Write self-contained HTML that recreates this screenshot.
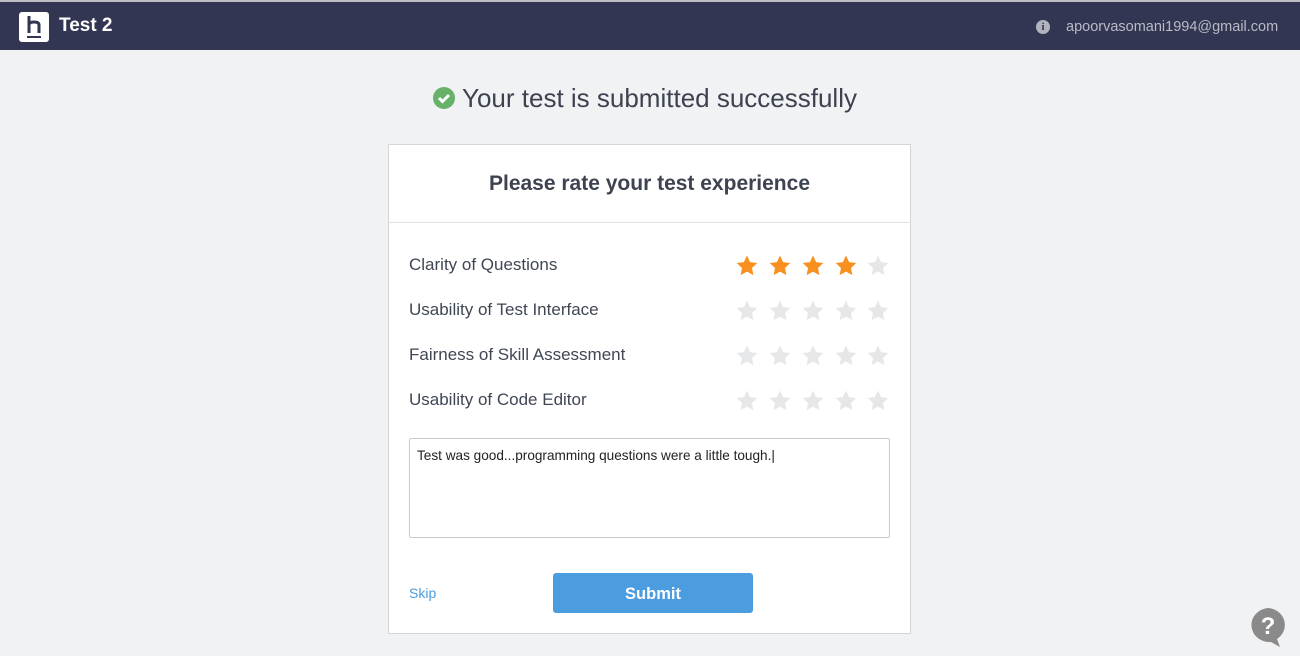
<!DOCTYPE html>
<html><head><meta charset="utf-8"><style>
*{margin:0;padding:0;box-sizing:border-box}
body{width:1300px;height:656px;background:#f1f2f4;font-family:"Liberation Sans","DejaVu Sans",sans-serif;position:relative;overflow:hidden}
.top{position:absolute;left:0;top:0;width:1300px;height:2px;background:#bdbdc2}
.hdr{position:absolute;left:0;top:2px;width:1300px;height:48px;background:#333652}
.logo{position:absolute;left:19px;top:10px;width:30px;height:30px;background:#fff;border-radius:3px}
.ttl{position:absolute;left:59px;top:13px;color:#fff;font-weight:bold;font-size:19px}
.info{position:absolute;left:1036px;top:18px;width:14px;height:14px;border-radius:50%;background:#b0b3bd;color:#333652;font-size:11px;font-weight:bold;text-align:center;line-height:14px;font-family:"Liberation Serif",serif}
.mail{position:absolute;left:1066px;top:17px;color:#b8bbc6;font-size:14.5px}
.succ{position:absolute;top:83px;font-size:26px;color:#3c4250}
.chk{position:absolute;left:433px;top:87px;width:22px;height:22px;border-radius:50%;background:#67b168}
.card{position:absolute;left:388px;top:144px;width:523px;height:490px;background:#fff;border:1px solid #d3d5d9}
.ch{height:78px;border-bottom:1px solid #e2e3e6;text-align:center;font-weight:bold;font-size:21px;color:#3d4350;padding-top:27px}
.row{position:absolute;left:20px;font-size:17px;color:#3f4654}
.stars{position:absolute;left:346px}
.stars svg{position:absolute;width:24px;height:24px}
.ta{position:absolute;left:20px;top:293px;width:481px;height:100px;border:1px solid #c9cbcf;border-radius:2px;font-size:13.6px;color:#222;padding:9px 7px}
.skip{position:absolute;left:20px;top:440px;color:#4a9de0;font-size:14px}
.btn{position:absolute;left:164px;top:428px;width:200px;height:40px;background:#4c9ce0;border-radius:3px;color:#fff;font-weight:bold;font-size:16.5px;text-align:center;line-height:42px}
</style></head><body>
<div class="top"></div>
<div class="hdr">
<div class="logo"><svg width="30" height="30" viewBox="0 0 30 30"><path d="M10 4v17M10 13q0-3 5-3t5 3v8" stroke="#333652" stroke-width="3" fill="none"/><rect x="8" y="24" width="14" height="2" fill="#333652"/></svg></div>
<div class="ttl">Test 2</div>
<div class="info">i</div>
<div class="mail">apoorvasomani1994@gmail.com</div>
</div>
<div class="chk"><svg width="22" height="22" viewBox="0 0 22 22"><path d="M6 11l3.5 3.5L16 8" stroke="#fff" stroke-width="3" fill="none"/></svg></div>
<div class="succ" style="left:462px">Your test is submitted successfully</div>
<div class="card">
<div class="ch">Please rate your test experience</div>
<div class="row" style="top:110px">Clarity of Questions</div>
<div class="row" style="top:155px">Usability of Test Interface</div>
<div class="row" style="top:200px">Fairness of Skill Assessment</div>
<div class="row" style="top:245px">Usability of Code Editor</div>
<svg width="0" height="0" style="position:absolute"><defs><path id="s" d="M12 1.5l3.1 6.6 7.2.9-5.3 5 1.4 7.1L12 17.6l-6.4 3.5 1.4-7.1-5.3-5 7.2-.9z"/></defs></svg>
<div class="stars" style="top:109px">
<svg style="left:0" viewBox="0 0 24 24"><use href="#s" fill="#f7901e"/></svg>
<svg style="left:33px" viewBox="0 0 24 24"><use href="#s" fill="#f7901e"/></svg>
<svg style="left:66px" viewBox="0 0 24 24"><use href="#s" fill="#f7901e"/></svg>
<svg style="left:99px" viewBox="0 0 24 24"><use href="#s" fill="#f7901e"/></svg>
<svg style="left:131px" viewBox="0 0 24 24"><use href="#s" fill="#e6e7e9"/></svg>
</div>
<div class="stars" style="top:154px">
<svg style="left:0" viewBox="0 0 24 24"><use href="#s" fill="#e6e7e9"/></svg>
<svg style="left:33px" viewBox="0 0 24 24"><use href="#s" fill="#e6e7e9"/></svg>
<svg style="left:66px" viewBox="0 0 24 24"><use href="#s" fill="#e6e7e9"/></svg>
<svg style="left:99px" viewBox="0 0 24 24"><use href="#s" fill="#e6e7e9"/></svg>
<svg style="left:131px" viewBox="0 0 24 24"><use href="#s" fill="#e6e7e9"/></svg>
</div>
<div class="stars" style="top:199px">
<svg style="left:0" viewBox="0 0 24 24"><use href="#s" fill="#e6e7e9"/></svg>
<svg style="left:33px" viewBox="0 0 24 24"><use href="#s" fill="#e6e7e9"/></svg>
<svg style="left:66px" viewBox="0 0 24 24"><use href="#s" fill="#e6e7e9"/></svg>
<svg style="left:99px" viewBox="0 0 24 24"><use href="#s" fill="#e6e7e9"/></svg>
<svg style="left:131px" viewBox="0 0 24 24"><use href="#s" fill="#e6e7e9"/></svg>
</div>
<div class="stars" style="top:244px">
<svg style="left:0" viewBox="0 0 24 24"><use href="#s" fill="#e6e7e9"/></svg>
<svg style="left:33px" viewBox="0 0 24 24"><use href="#s" fill="#e6e7e9"/></svg>
<svg style="left:66px" viewBox="0 0 24 24"><use href="#s" fill="#e6e7e9"/></svg>
<svg style="left:99px" viewBox="0 0 24 24"><use href="#s" fill="#e6e7e9"/></svg>
<svg style="left:131px" viewBox="0 0 24 24"><use href="#s" fill="#e6e7e9"/></svg>
</div>
<div class="ta">Test was good...programming questions were a little tough.|</div>
<div class="skip">Skip</div>
<div class="btn">Submit</div>
</div>
<svg style="position:absolute;left:1249px;top:607px" width="40" height="40" viewBox="0 0 40 40"><path d="M19 1a18 17 0 1 0 3 34l9 5-3-8A18 17 0 0 0 19 1z" fill="#8a8a8a"/><text x="19" y="27" font-family="Liberation Sans" font-weight="bold" font-size="24" fill="#fff" text-anchor="middle">?</text></svg>
</body></html>
